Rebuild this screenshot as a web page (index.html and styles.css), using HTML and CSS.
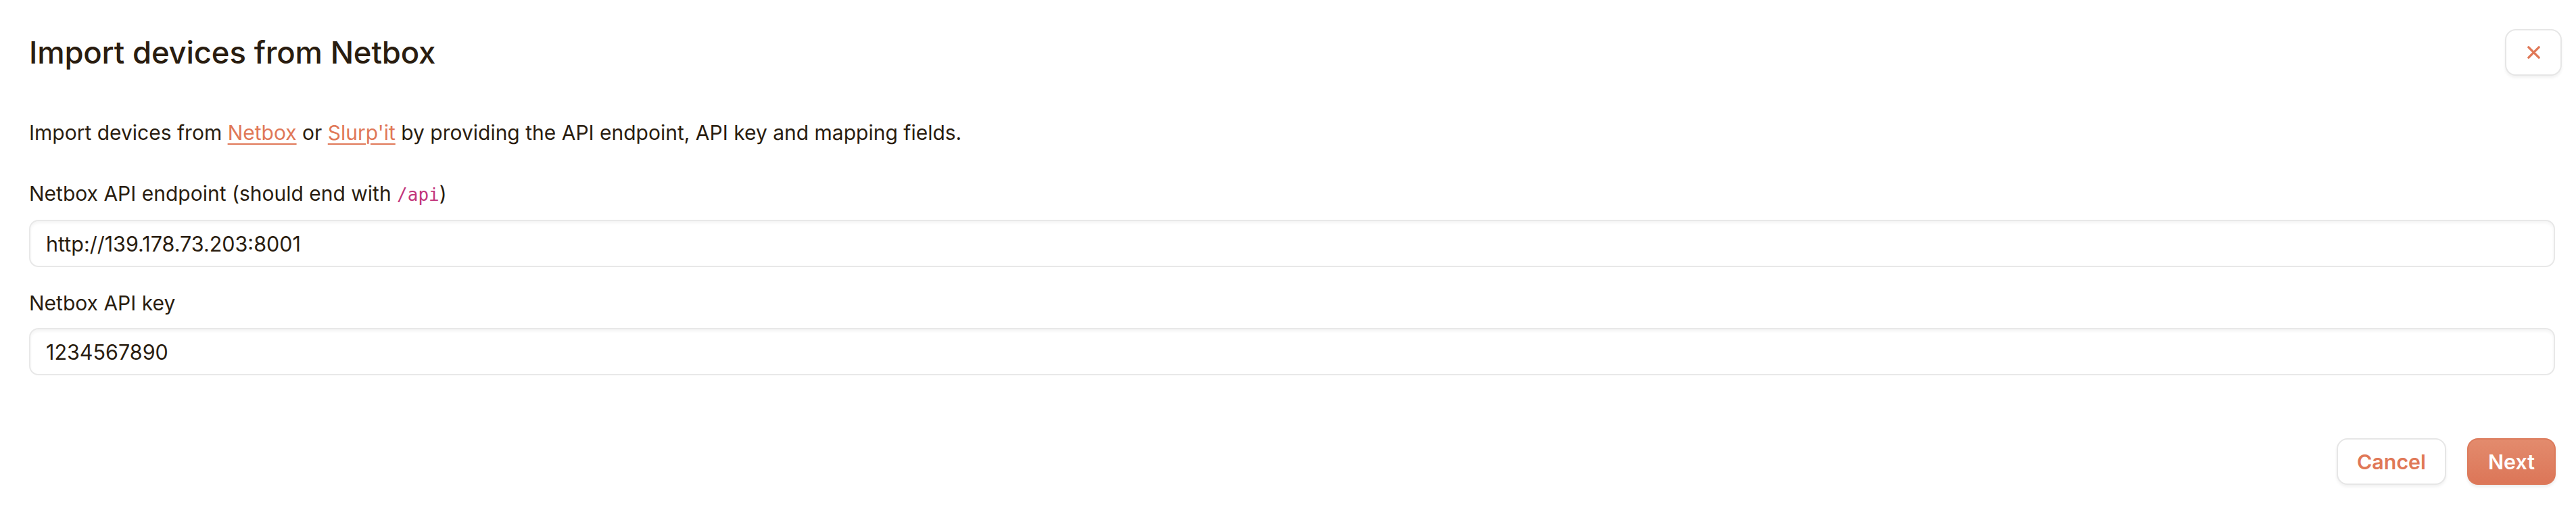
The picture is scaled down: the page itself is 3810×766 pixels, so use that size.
FILE: index.html
```html
<!DOCTYPE html>
<html lang="en">
<head>
<meta charset="utf-8">
<title>Import devices from Netbox</title>
<link rel="stylesheet" href="styles.css">
</head>
<body>
<div class="modal">
  <header class="modal-header">
    <h1 class="modal-title">Import devices from Netbox</h1>
    <button class="close-btn" type="button" aria-label="Close">
      <svg width="20" height="20" viewBox="0 0 20 20" fill="none" stroke="currentColor" stroke-width="3.6" stroke-linecap="round"><path d="M2 2 L18 18 M18 2 L2 18"/></svg>
    </button>
  </header>
  <div class="modal-body">
    <p class="intro">Import devices from <a href="#">Netbox</a> or <a href="#">Slurp'it</a> by providing the API endpoint, API key and mapping fields.</p>
    <div class="field">
      <label class="field-label">Netbox API endpoint (should end with <code>/api</code>)</label>
      <div class="input">http://139.178.73.203:8001</div>
    </div>
    <div class="field">
      <label class="field-label">Netbox API key</label>
      <div class="input">1234567890</div>
    </div>
  </div>
  <footer class="modal-footer">
    <button class="btn btn-secondary" type="button">Cancel</button>
    <button class="btn btn-primary" type="button">Next</button>
  </footer>
</div>
</body>
</html>
```

FILE: styles.css
```css
* { box-sizing: border-box; }
html, body { margin: 0; padding: 0; background: #ffffff; }
body {
  font-family: Inter, "Noto Sans", sans-serif;
  color: #2a1d10;
  width: 3810px;
  height: 766px;
  overflow: hidden;
}
.modal { display: flex; flex-direction: column; }
.modal-header {
  display: flex;
  align-items: center;
  justify-content: space-between;
  padding: 43px 21px 0 43px;
}
.modal-title {
  margin: 0;
  font-size: 45.5px;
  font-weight: 500;
  line-height: 69px;
  letter-spacing: -0.2px;
}
.close-btn {
  width: 84px;
  height: 69px;
  border: 2px solid #e6e6e6;
  border-radius: 16px;
  background: #fff;
  color: #e07857;
  display: flex;
  align-items: center;
  justify-content: center;
  box-shadow: 0 3px 4px rgba(0,0,0,0.06);
  padding: 0;
}
.close-btn svg { width: 19px; height: 19px; }
.modal-body {
  padding: 64px 31px 0 43px;
  display: flex;
  flex-direction: column;
}
.intro {
  margin: 0 0 50px 0;
  font-size: 30px;
  line-height: 40px;
}
.intro a {
  color: #e07857;
  text-decoration: underline;
  text-decoration-thickness: 2px;
  text-underline-offset: 5px;
}
.field { display: flex; flex-direction: column; gap: 17px; margin-bottom: 33px; }
.field:last-child { margin-bottom: 0; }
.field-label {
  font-size: 30px;
  line-height: 40px;
}
.field-label code {
  font-family: "DejaVu Sans Mono", "Liberation Mono", monospace;
  font-size: 26px;
  color: #c2357b;
}
.input {
  height: 70px;
  border: 2px solid #e8e8e8;
  border-radius: 14px;
  padding: 0 23px;
  display: flex;
  align-items: center;
  font-size: 30.5px;
  background: #fff;
  box-shadow: inset 0 3px 4px rgba(0,0,0,0.045);
}
.modal-footer {
  display: flex;
  justify-content: flex-end;
  gap: 31px;
  padding: 93px 30px 0 0;
}
.btn {
  height: 69px;
  border-radius: 16px;
  font-family: Inter, "Noto Sans", sans-serif;
  font-size: 30.4px;
  font-weight: 600;
  padding: 0;
  display: flex;
  align-items: center;
  justify-content: center;
}
.btn-secondary {
  width: 162px;
  background: #fff;
  color: #e07857;
  border: 2px solid #e6e6e6;
  box-shadow: 0 3px 4px rgba(0,0,0,0.06);
}
.btn-primary {
  width: 131px;
  color: #fff;
  border: 2px solid #dc7a5b;
  background: linear-gradient(#e38b6d, #dc7658);
  box-shadow: 0 3px 4px rgba(0,0,0,0.08);
}
```
